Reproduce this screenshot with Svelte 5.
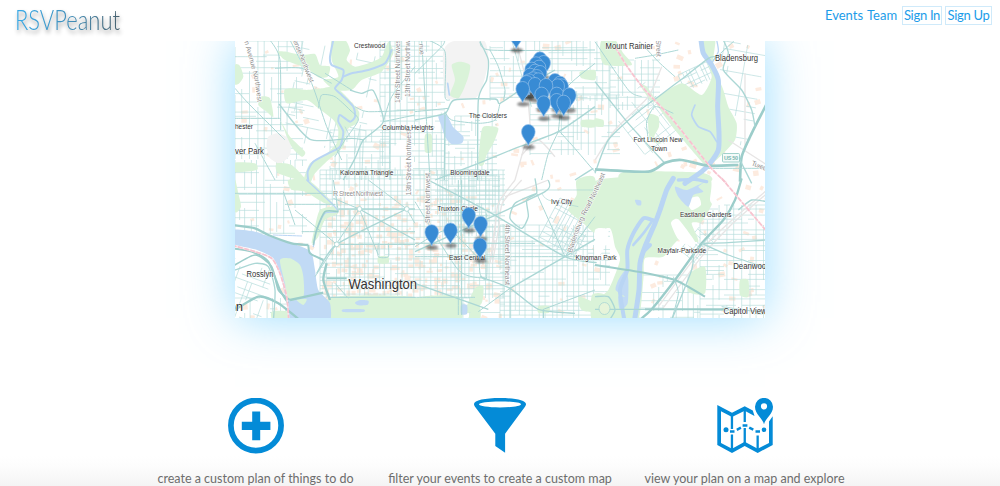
<script>
  // Every map tile carries its own origin; tile geometry is stored at three units per pixel.
  const tiles = [
    {
      x: 235, y: 40,
      parks: [
        '0,75 15,78 25,110 10,132 -5,130',
        '128,35 155,35 200,45 240,42 255,75 285,80 278,110 250,112 215,85 150,60',
        '290,0 330,0 345,30 335,60 360,80 400,70 440,50 460,5 475,40 440,95 380,120 350,150 300,150 265,120 310,110 290,60',
        '148,150 175,145 215,150 260,145 300,140 330,165 372,215 365,250 335,270 325,320 280,360 240,400 225,430 205,425 225,370 270,345 305,310 310,270 295,240 250,205 215,180 155,190',
        '78,170 105,175 115,230 95,215 70,195',
        '138,245 165,290 210,335 200,350 170,320',
        '125,370 170,375 215,425 130,400', '0,368 60,370 65,390 0,396'
      ],
      gray: ['100,290 130,280 165,300 165,345 135,370 105,355 95,320'],
      rivers: [
        ['295,0 285,50 290,75 325,90 320,120 300,145 320,165 355,200 360,230 345,245 315,225 310,245 325,275 315,320 280,340 235,365 218,395 220,422', 6],
        ['325,110 350,100 400,90 450,70 470,30', 6]
      ],
      roads: [
        ['105,0 135,60 137,270', 3], ['165,0 230,130 275,260 320,360', 3], ['132,192 225,298 350,295 385,300', 4],
        ['0,145 40,190 135,285 150,300', 3], ['345,150 380,160 415,152 445,245 385,300 360,355 325,420', 4],
        ['445,245 470,170 540,80', 3], ['360,200 400,215 540,210', 3], ['445,245 540,225', 3], ['270,100 350,150', 3],
        ['465,0 465,420', 3], ['500,0 500,180', 2], ['0,235 137,235', 3], ['250,205 260,165 300,170 345,210 370,240 330,300 300,350', 3],
        ['60,310 120,420', 3], ['385,300 380,420', 2], ['0,50 95,50', 2], ['120,85 200,85 290,130', 3], ['330,260 345,290', 2]
      ]
    },
    {
      x: 415, y: 40,
      parks: [
        '200,270 215,258 250,265 235,310 215,345 205,375 190,370', '30,285 50,285 50,335 30,335',
        '495,95 540,90 540,120 500,115', '500,240 540,240 540,262 500,260'
      ],
      gray: ['85,35 110,5 205,0 220,60 205,130 180,175 95,175 85,110'],
      topParks: ['110,75 135,65 165,75 160,110 145,150 130,175 105,165 120,120'],
      lakes: ['70,228 95,225 115,262 145,290 140,310 110,312 90,290 80,260'],
      rivers: [['98,130 103,165', 5]],
      roads: [
        ['40,0 90,35 90,170 105,180', 3], ['0,240 90,220 118,180 240,177 255,190 330,140 420,90', 4],
        ['90,215 110,240 190,250 240,240 255,190', 3], ['195,0 225,30 540,30', 3], ['195,5 220,60 215,120 190,180 188,420', 4],
        ['225,30 250,80 270,150 265,180', 3], ['60,420 190,370 300,325 430,275 540,200', 4], ['430,275 400,340 380,420', 3],
        ['430,270 475,320 535,390 540,392', 3], ['90,215 88,420', 4], ['0,215 100,205', 3], ['0,100 80,20 90,0', 3], ['540,70 450,150 430,275', 3],
        ['535,385 480,420', 4], ['20,0 45,420', 3], ['290,0 330,140 350,200', 2]
      ],
      rails: ['302,0 330,110 345,260 325,330 300,420', '320,345 370,300 420,350']
    },
    {
      x: 595, y: 40,
      parks: [
        '20,0 60,0 85,40 110,75 30,75 15,40',
        '190,170 260,130 320,165 350,110 330,50 315,0 360,0 355,70 385,150 400,200 425,250 420,300 380,345 345,375 325,370 240,270 180,185',
        '135,135 155,140 185,185 165,180', '160,225 190,230 192,260 178,290 200,310 165,300', '0,235 25,240 25,260 0,258', '90,395 320,398 340,425 90,425'
      ],
      rivers: [['318,0 325,40 350,75 370,120 368,200 372,280 370,330 345,370 320,395 270,430', 15], ['300,195 290,225 310,260 345,275 365,305', 5], ['365,0 370,35 350,70', 4]],
      roads: [
        ['0,125 100,250 210,370', 4], ['0,400 40,300 130,215 190,170 270,110 340,55 360,50', 4],
        ['0,388 160,395 210,368 260,360 340,377 430,375', 8], ['435,425 440,350 470,280 516,190', 8], ['425,340 470,430', 4],
        ['385,0 400,40 385,90 440,150 470,210 480,260', 4], ['130,0 190,65 240,110', 3], ['0,5 100,150 140,170', 3],
        ['120,55 180,45 250,30', 3], ['160,300 155,245 180,200 235,220', 3], ['355,60 420,0', 3], ['340,385 516,385', 3]
      ],
      borders: ['60,20 100,85 150,150 230,235 345,380 395,430'],
      rails: ['200,80 160,170 60,270 0,360', '516,375 400,300', '450,100 450,330']
    },
    {
      x: 235, y: 180,
      parks: [
        '160,0 220,0 290,65 270,70 210,35 170,30', '0,0 10,40 18,80 0,95', '255,90 300,80 310,100 270,120 250,170 230,190 240,140',
        '290,352 540,352 540,425 265,425', '430,230 460,230 460,250 430,250', '110,395 160,395 165,425 115,425'
      ],
      lakes: ['-9,150 60,155 90,165 200,200 230,220 240,270 250,330 285,370 280,430 175,430 155,370 140,300 115,235 60,208 -9,190'],
      topParks: ['135,240 165,235 195,255 205,290 205,350 160,360 150,310', '185,360 215,358 205,375'],
      pools: ['325,388 385,388 385,396 325,396', '360,368 375,360 400,362 398,374 370,376'],
      rivers: [['215,0 290,70 308,95 270,100 245,150 235,200', 4], ['115,165 200,168', 3]],
      roads: [
        ['373,87 540,180', 4], ['373,87 240,290', 3], ['373,87 430,225', 3], ['515,87 305,193 245,280', 4], ['295,55 373,87', 3],
        ['305,193 180,90', 3], ['515,87 400,0', 3], ['515,87 540,130', 3], ['0,40 300,40', 3], ['310,87 540,87', 4],
        ['150,73 300,73', 3], ['200,155 540,155', 3], ['305,193 540,193', 4], ['-9,135 60,145 100,165 170,190 220,195', 7],
        ['220,195 225,220 265,240', 6], ['165,360 265,338', 7], ['275,250 265,300 285,360', 7], ['275,295 335,295', 6],
        ['-9,260 60,225 110,260 130,330 165,360', 5], ['-9,205 50,215 100,245 135,330 160,370', 6], ['-9,395 70,350 130,370 200,425', 7],
        ['0,270 60,250 100,260 120,330 115,425', 4], ['285,352 540,352', 4], ['145,35 180,135', 3], ['310,95 270,95 245,150 235,195', 5],
        ['295,0 310,95', 3], ['345,90 345,290', 3], ['430,190 430,230 460,230 460,190', 3], ['300,310 340,355', 3]
      ],
      borders: ['-9,196 60,215 110,235 135,280 155,350 162,430']
    },
    {
      x: 415, y: 180,
      parks: [
        '485,0 540,-5 545,155 500,125 460,90 485,45', '0,355 130,350 135,425 0,425', '180,325 205,318 200,370 160,400 155,380', '370,378 402,378 402,398 370,398',
        '490,350 540,370 540,395 500,390', '175,380 195,380 195,420 160,420'
      ],
      pools: ['138,375 156,375 156,402 138,402'],
      roads: [
        ['40,0 230,100 450,230 545,248', 4], ['0,215 165,140 390,35 400,0', 4], ['0,65 130,270 210,295', 3], ['195,290 285,325 370,388 480,400', 4],
        ['285,325 450,230 540,178', 4], ['285,325 190,395', 3], ['215,100 215,290 195,280 190,180', 3],
        ['360,-5 365,40 335,60 340,110 320,145 285,115 300,70 365,40', 4], ['0,310 220,388', 4], ['0,200 100,150 190,235', 3],
        ['450,230 365,40', 3], ['385,388 385,425', 4], ['0,352 180,352', 3], ['140,0 140,405', 3], ['130,0 130,405', 3], ['0,230 540,230', 3], ['0,190 360,190', 3],
        ['385,388 540,330', 3], ['0,30 540,30', 2], ['450,230 540,110', 3], ['285,325 285,425', 3], ['380,40 400,60 490,80', 2]
      ],
      rails: ['300,0 250,70 240,150 225,250', '320,0 262,70 250,150 232,250', '270,50 400,0', '230,200 240,140', '225,240 240,180'],
      lakes: []
    },
    {
      x: 595, y: 180,
      parks: [
        '-9,10 100,-10 250,-10 345,-5 345,60 350,75 320,125 290,130 310,185 250,180 205,230 150,235 145,300 125,430 20,430 -5,370 40,330 75,240 60,200 45,145 -9,145',
        '285,280 330,260 330,340 280,335', '435,300 460,300 460,350 435,345', '-9,345 30,345 60,420 -9,420'
      ],
      whites: ['228,130 250,118 300,185 290,200 250,178', '275,60 310,50 318,75 290,90', '0,150 40,150 30,200 0,240'],
      lakes: ['240,20 275,30 330,5 310,20 325,35 295,45 280,80 250,50', '90,350 62,330 70,300 92,270 100,300 98,370 75,390 70,350', '120,60 138,62 138,76 126,75'],
      rivers: [
        ['235,-5 215,30 195,90 180,130 150,200 135,250 132,330 118,425', 15], ['172,120 145,115 115,160 97,210 97,270 75,330 88,420', 12],
        ['250,0 300,-2 335,5', 10], ['170,125 145,160 115,195', 8], ['165,195 145,215', 12]
      ],
      roads: [
        ['440,-5 420,60 385,120 320,190 240,300 170,388 140,415', 7], ['0,255 130,275 240,300 330,350', 6], ['320,190 400,225 510,262', 4],
        ['150,388 390,388', 6], ['325,190 400,188 516,180', 4], ['516,65 470,60 430,90', 4], ['0,388 150,388', 4], ['295,220 290,270 230,420', 4],
        ['0,350 40,350 60,390 40,425', 4], ['235,290 250,340 230,420', 3], ['380,380 516,400', 3]
      ],
      borders: ['380,-5 516,155'],
      rails: ['516,30 400,130 310,220 190,380', '516,40 405,138 320,230 200,390']
    }
  ];

  // Catmull-Rom smoothing of a point list.
  function curve(points, closed = false) {
    const p = points.split(' ').map((s) => s.split(',').map(Number));
    const n = p.length;
    const at = (i) => (closed ? p[(i + n) % n] : p[Math.max(0, Math.min(n - 1, i))]);
    let d = `M${p[0]}`;
    for (let i = 0; i < (closed ? n : n - 1); i++) {
      const [a, b, c, e] = [at(i - 1), at(i), at(i + 1), at(i + 2)];
      const k = 9;
      d += `C${(b[0] + (c[0] - a[0]) / k).toFixed(1)} ${(b[1] + (c[1] - a[1]) / k).toFixed(1)} ${(c[0] - (e[0] - b[0]) / k).toFixed(1)} ${(c[1] - (e[1] - b[1]) / k).toFixed(1)} ${c[0]} ${c[1]}`;
    }
    return closed ? d + 'Z' : d;
  }

  let seed = 7;
  const rnd = () => (seed = (seed * 16807) % 2147483647) / 2147483647;

  // Local street grid made of broken parallel runs.
  function grid(w, h, sx, sy, fill) {
    let d = '';
    for (let x = 0; x < w; x += sx * (0.7 + rnd() * 0.7)) {
      for (let y = 0; y < h; ) {
        const len = sy * (1 + Math.floor(rnd() * 5));
        if (rnd() < fill) d += `M${x.toFixed(1)} ${y.toFixed(1)}V${Math.min(h, y + len).toFixed(1)}`;
        y += len;
      }
    }
    for (let y = 0; y < h; y += sy * (0.7 + rnd() * 0.7)) {
      for (let x = 0; x < w; ) {
        const len = sx * (1 + Math.floor(rnd() * 5));
        if (rnd() < fill) d += `M${x.toFixed(1)} ${y.toFixed(1)}H${Math.min(w, x + len).toFixed(1)}`;
        x += len;
      }
    }
    return d;
  }

  const grids = [
    [235, 41, 68, 118, 7, 6, 0.68, 0], [303, 41, 80, 100, 8, 7, 0.4, 12], [235, 160, 72, 74, 6, 6, 0.7, 0], [380, 41, 65, 135, 5.5, 5.5, 0.8, 0],
    [320, 170, 185, 128, 5, 4.5, 0.9, 0], [445, 116, 52, 60, 5, 5, 0.65, 0], [490, 41, 120, 60, 6.5, 5, 0.6, 0], [530, 95, 90, 60, 5.5, 5, 0.6, 0],
    [500, 225, 110, 95, 5.5, 5, 0.85, 0], [610, 60, 50, 50, 6, 6, 0.75, 0], [678, 75, 34, 18, 4.5, 4.5, 0.9, -25], [725, 41, 42, 100, 8, 8, 0.45, 10],
    [560, 198, 42, 46, 4, 5, 0.85, 28], [700, 205, 68, 115, 6, 5, 0.75, 0], [640, 275, 60, 44, 6, 6, 0.5, 0], [235, 258, 45, 60, 6, 6, 0.5, 20],
    [610, 110, 45, 60, 7, 7, 0.5, -38], [235, 298, 270, 20, 5, 5, 0.35, 0], [440, 176, 60, 60, 4, 4.5, 0.7, 0], [680, 250, 30, 20, 4, 4, 0.8, -50],
    [330, 130, 60, 50, 6, 6, 0.7, 0]
  ].map(([x, y, w, h, sx, sy, f, a]) => ({ t: `translate(${x} ${y}) rotate(${a})`, d: grid(w, h, sx, sy, f) }));

  const tints = Array.from({ length: 560 }, (_, i) => {
    const core = i < 270;
    return {
      x: core ? 322 + rnd() * 165 : 235 + rnd() * 530,
      y: core ? 196 + rnd() * 105 : 41 + rnd() * 277,
      w: 2 + rnd() * 5, h: 2 + rnd() * 4, a: core ? 0 : rnd() * 60 - 30
    };
  });

  const labels = [
    ['Crestwood', 354, 48, 31], ['hester', 235, 128.6, 18], ['ver Park', 235, 154.4, 29, 8.2], ['Columbia Heights', 382, 129.8, 51.5],
    ['Kalorama Triangle', 340, 174.8, 53.5], ['The Cloisters', 469, 118.3, 38], ['Bloomingdale', 450.3, 174.8, 39.4], ['Mount Rainier', 605.6, 49.4, 47.5, 8.6],
    ['Bladensburg', 715, 61, 43, 8.6], ['Fort Lincoln New', 633.5, 142.3, 49], ['Town', 651, 150.8, 16], ['Rosslyn', 246.5, 277, 27, 8.4],
    ['Truxton Circle', 437.3, 210.6, 40.5], ['East Central', 449, 260, 36.5], ['Ivy City', 551, 203.8, 21.3], ['Kingman Park', 575.6, 260, 41],
    ['Eastland Gardens', 680, 217.4, 51.5], ['Mayfair-Parkside', 657.6, 253, 48.5], ['Deanwoo', 733.2, 268.6, 33, 8.6], ['Capitol View', 723.6, 313.8, 43, 8.6],
    ['Washington', 348.6, 288.6, 68.5, 14.5], ['on', 228.5, 311, 14.5, 13.5]
  ];

  const streets = [
    ['R Street Northwest', 333, 196, 50, 0], ['14th Street Northwest', 399.5, 103, 65, -90], ['13th Street Northwest', 410, 97, 66, -90],
    ['13th Street Northwest', 410.5, 195.5, 66, -90], ['Street Northwest', 429.5, 223, 50, -90], ['4th Street Northeast', 504.6, 224, 61, 90],
    ['ense Northwest', 293, 41, 45, 68], ['Street', 656, 40, 17, 88], ['nue', 419, 44, 11, 85], ['Tuxedo', 751, 165, 19, 22]
  ];

  const pins = [
    [516.3, 48.8], ...[[375, 99], [386, 110], [363, 114], [372, 124], [350, 130], [360, 136], [375, 140], [345, 148], [365, 152], [355, 159], [370, 162],
      [342, 165], [335, 170], [420, 164], [435, 172], [440, 180], [428, 180], [360, 176], [393, 179], [323, 188], [380, 205], [425, 205], [463, 207],
      [425, 224], [386, 231], [446, 229], [340, 317]].map(([x, y]) => [415 + x / 3, 40 + y / 3]),
    [468.7, 228.8], [480.6, 237.5], [450.5, 244.1], [431.7, 245.9], [480, 259.2]
  ];
</script>

{#snippet layer(tile, list, cls)}
  <g transform="translate({tile.x} {tile.y}) scale(0.33333)">
    {#each list ?? [] as shape}<path class={cls} d={curve(shape, true)} />{/each}
  </g>
{/snippet}

<div class="page">
  <header>
    <svg class="logo" width="130" height="41" viewBox="0 0 130 41">
      <defs>
        <linearGradient id="brand" x1="0" x2="1">
          <stop offset="0" stop-color="#35a9e8" />
          <stop offset="0.5" stop-color="#4291bd" />
          <stop offset="1" stop-color="#48616e" />
        </linearGradient>
      </defs>
      <text x="15" y="29.5" textLength="105" lengthAdjust="spacingAndGlyphs" fill="url(#brand)">RSVPeanut</text>
    </svg>
    <nav>
      <a href="#events" class="events">Events</a>
      <a href="#team" class="team">Team</a>
      <a href="#signin" class="boxed in">Sign In</a>
      <a href="#signup" class="boxed up">Sign Up</a>
    </nav>
  </header>

  <main>
    <div class="map">
      <svg width="530" height="277" viewBox="235 41 530 277">
        <defs>
          <filter id="soft" x="-50%" y="-100%" width="200%" height="300%"><feGaussianBlur stdDeviation="1.3" /></filter>
          <path id="west" d="M243 38Q250 60 255 82L258 106" />
          <path id="bladen" d="M572 253Q577 235 585 216L594 199Q600 187 606 172" />
        </defs>
        <rect x="235" y="41" width="530" height="277" fill="#fff" />
        {#each tints as t}
          <rect x={t.x} y={t.y} width={t.w} height={t.h} fill="#fdebdf" transform="rotate({t.a} {t.x} {t.y})" />
        {/each}
        {#each grids as g}<path class="minor" d={g.d} transform={g.t} />{/each}
        {#each tiles as tile}{@render layer(tile, tile.gray, 'gray')}{/each}
        {#each tiles as tile}{@render layer(tile, tile.parks, 'park')}{/each}
        {#each tiles as tile}
          {@render layer(tile, tile.whites, 'white')}
          {@render layer(tile, tile.lakes, 'water')}
          {@render layer(tile, tile.topParks, 'park')}
          {@render layer(tile, tile.pools, 'water')}
          <g transform="translate({tile.x} {tile.y}) scale(0.33333)">
            {#each tile.rivers ?? [] as [p, w]}<path class="river" d={curve(p)} stroke-width={w} />{/each}
          </g>
        {/each}
        {#each tiles as tile}
          <g transform="translate({tile.x} {tile.y}) scale(0.33333)">
            {#each tile.rails ?? [] as p}<path class="rail" d={curve(p)} />{/each}
            {#each tile.roads as [p, w]}<path class={w > 4 ? 'road strong' : 'road'} d={curve(p)} stroke-width={w} />{/each}
            {#each tile.borders ?? [] as p}<path class="border-under" d={curve(p)} /><path class="border" d={curve(p)} />{/each}
          </g>
        {/each}
        {#each [[359.5, 209], [406.8, 209], [336.8, 244.3]] as [x, y]}<circle cx={x} cy={y} r="2.4" class="ring" />{/each}
        <ellipse cx="604.5" cy="308.5" rx="5.5" ry="6" class="ring green" />

        <g class="streets">
          {#each streets as [t, x, y, len, a]}
            <text {x} {y} textLength={len} transform="rotate({a} {x} {y})">{t}</text>
          {/each}
          <text><textPath href="#west" textLength="66">on Avenue Northwest</textPath></text>
          <text><textPath href="#bladen" textLength="86">Bladensburg Road Northeast</textPath></text>
        </g>
        <rect x="722.5" y="153.5" width="17" height="8.5" rx="1" fill="#f4fbfa" stroke="#8cc6bf" stroke-width="0.8" />
        <text class="shield" x="724" y="160.2" textLength="14">US 50</text>
        <g class="labels">
          {#each labels as [t, x, y, len, size]}
            <text {x} {y} textLength={len} lengthAdjust="spacingAndGlyphs" font-size={size ?? 7.8}>{t}</text>
          {/each}
        </g>

        {#each pins as [x, y]}<ellipse cx={x + 0.5} cy={y + 1.5} rx="6" ry="2.4" fill="#000" opacity="0.45" filter="url(#soft)" />{/each}
        {#each pins as [x, y]}
          <path class="pin" transform="translate({x} {y})" d="M0 0C-1.4-5-6.8-8-6.8-14A6.8 7.2 0 0 1 6.8-14C6.8-8 1.4-5 0 0Z" />
        {/each}
      </svg>
    </div>

    <section class="features">
      <article>
        <svg width="56" height="56" viewBox="0 0 56 56">
          <circle cx="28" cy="27.6" r="25.1" fill="none" stroke="#048bd7" stroke-width="5.7" />
          <path d="M24.2 13.6h8v10.1h10.2v8.2H32.2v10.3h-8V31.9H13.8v-8.2h10.4z" />
        </svg>
        <p class="one">create a custom plan of things to do</p>
      </article>
      <article>
        <svg width="56" height="56" viewBox="0 0 56 56">
          <path fill-rule="evenodd" d="M2 6C2 2.3 13.2 0 28 0s26 2.3 26 6c0 1.2-.5 1.9-1.2 2.9L33.1 35.7v19L23.3 48V35.7L3.2 8.9C2.5 7.9 2 7.2 2 6ZM7 6.3C7 8.200 16 9.400 28 9.400s21-1.200 21-3.100S40 3.400 28 3.400 7 4.500 7 6.300Z" />
        </svg>
        <p class="two">filter your events to create a custom map</p>
      </article>
      <article>
        <svg width="56" height="56" viewBox="0 0 56 56">
          <path fill-rule="evenodd" d="M.3 7 15 14.7 27.700 8.300 35.800 12.500 37.500 18 27.700 12.700 15 19.100 4 13.200V45L15 50.700 27.700 43.700 40.700 50.700 52 45V23.500L55.700 18.300V47L40.700 54.900 27.700 47.900 15 54.900.3 47Z" />
          <path d="M13.800 18h2.300v13h-2.300zM13.800 36.500h2.300V51h-2.300zM26.600 12h2.300v12h-2.300zM26.600 30h2.300v15h-2.300zM39.500 37.500h2.300V51h-2.300z" />
          <circle cx="9" cy="31.800" r="2.500" />
          <circle cx="47" cy="31.800" r="2.300" />
          <path d="M13 33.600h4.500M19.800 31.800l4.100-2.100M25.600 27.500h4.800M32.200 29.600l4.100 2.100M38.500 33.600H43" fill="none" stroke="#048bd7" stroke-width="2.500" />
          <path fill-rule="evenodd" d="M47 26.300C45.500 20 38 16.500 38 8.800a9 8.900 0 0 1 18 0C56 16.500 48.500 20 47 26.300ZM47 5.200a3.100 3.100 0 1 0 0 6.200 3.100 3.100 0 0 0 0-6.200Z" />
        </svg>
        <p class="three">view your plan on a map and explore</p>
      </article>
    </section>
  </main>
</div>

<style>
  :global(body) { margin: 0; background: #fff; overflow: hidden; }
  .page {
    height: 486px;
    overflow: hidden;
    font-family: Lato, sans-serif;
    background: linear-gradient(#fff 456px, #fcfcfc 468px, #f4f4f4 486px);
  }
  header {
    position: relative;
    z-index: 1;
    display: flex;
    justify-content: space-between;
    height: 41px;
    background: #fff;
  }
  .logo { filter: drop-shadow(1px 3px 2px rgba(0, 0, 0, 0.45)); }
  .logo text { font: 300 28px Lato, sans-serif; }
  nav { display: flex; align-items: flex-start; padding: 6px 8px 0 0; }
  nav a {
    box-sizing: border-box;
    height: 19px;
    line-height: 19px;
    font-size: 13px;
    color: #1b9ce9;
    text-decoration: none;
    white-space: nowrap;
  }
  .events { width: 42px; }
  .team { width: 35px; }
  .boxed { border: 1px solid #cfeafa; line-height: 17px; display: flex; justify-content: center; letter-spacing: -0.3px; }
  .in { width: 40px; margin-right: 3px; }
  .up { width: 47px; }
  .map {
    width: 530px;
    height: 277px;
    margin: 0 auto;
    box-shadow: 0 0 46px rgba(108, 205, 255, 0.68);
  }
  .map svg { display: block; }
  .minor { fill: none; stroke: #b7dddc; stroke-width: 0.65; }
  .park { fill: #daf3d9; }
  .gray { fill: #f3f3f3; }
  .white { fill: #fff; }
  .water { fill: #c1daf5; }
  .river { fill: none; stroke: #b9d5f4; stroke-linecap: round; }
  .road { fill: none; stroke: #abd7d5; stroke-linejoin: round; }
  .strong { stroke: #9ccdca; }
  .rail { fill: none; stroke: #e7e5e5; stroke-width: 4; }
  .border-under { fill: none; stroke: #fbe3e8; stroke-width: 5; }
  .border { fill: none; stroke: #f7c3cf; stroke-width: 5; stroke-dasharray: 14 5; }
  .ring { fill: #fff; stroke: #aed8d5; stroke-width: 0.9; }
  .green { fill: #e6f4da; }
  .streets text { font: 7px 'Liberation Sans', sans-serif; fill: #909090; stroke: #fff; stroke-width: 1px; paint-order: stroke; }
  .labels text { font-family: 'Liberation Sans', sans-serif; fill: #333; stroke: rgba(255, 255, 255, 0.8); stroke-width: 1px; paint-order: stroke; }
  .shield { font: bold 5.5px 'Liberation Sans', sans-serif; fill: #79b5ae; }
  .pin { fill: #388bd4; stroke: #94c0ea; stroke-width: 0.7; }
  .features {
    display: grid;
    grid-template-columns: repeat(3, 244.5px);
    justify-content: center;
    margin-top: 80px;
  }
  article { display: flex; flex-direction: column; align-items: center; }
  article svg { fill: #048bd7; }
  p { margin: 16px 0 0; font-size: 12.5px; line-height: 18px; color: #6d6d6d; white-space: nowrap; }
</style>
